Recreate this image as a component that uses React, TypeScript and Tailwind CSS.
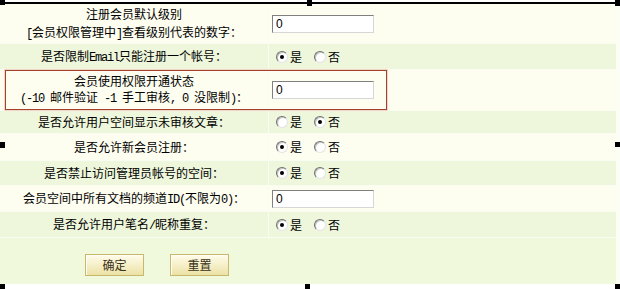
import React from "react";

const FONT = "font-['Noto_Sans_CJK_SC','Noto_Sans_CJK_SC',sans-serif]";

function M({ children }: { children: React.ReactNode }) {
  return (
    <span className="font-['Liberation_Mono',monospace] tracking-[-1.2px] whitespace-pre">
      {children}
    </span>
  );
}

function Radio({ checked }: { checked: boolean }) {
  return (
    <span className="relative inline-block w-[12px] h-[12px] rounded-full bg-white border border-t-[#6f6f6f] border-l-[#6f6f6f] border-r-[#e4e4e4] border-b-[#e4e4e4] shadow-[inset_1px_1px_0_#c4c4c4]">
      {checked && (
        <span className="absolute left-[3px] top-[3px] w-[4px] h-[4px] rounded-full bg-black" />
      )}
    </span>
  );
}

function RadioPair({ yes }: { yes: boolean }) {
  return (
    <div className="flex items-center pl-[7px] text-[12px] leading-[14px] text-black">
      <Radio checked={yes} />
      <span className="ml-[2px]">是</span>
      <span className="ml-[12px] flex items-center">
        <Radio checked={!yes} />
      </span>
      <span className="ml-[2px]">否</span>
    </div>
  );
}

function TextBox() {
  return (
    <div className="pl-[3px]">
      <input
        defaultValue="0"
        className="block w-[102px] h-[18px] bg-white border border-t-[#7f7f7f] border-l-[#7f7f7f] border-r-[#d6d6d6] border-b-[#d6d6d6] pl-[3px] text-[12px] leading-[16px] text-black font-['Liberation_Sans',sans-serif] outline-none"
      />
    </div>
  );
}

function Row({
  h,
  bg,
  label,
  right,
}: {
  h: string;
  bg: string;
  label: React.ReactNode;
  right: React.ReactNode;
}) {
  return (
    <div className={`flex gap-px ${h}`}>
      <div
        className={`w-[268px] flex flex-col items-center justify-center text-center text-[12px] text-black ${bg}`}
      >
        {label}
      </div>
      <div className={`flex-1 flex items-center ${bg}`}>{right}</div>
    </div>
  );
}

function Handle({ cls }: { cls: string }) {
  return <span className={`absolute w-[5px] h-[5px] bg-black ${cls}`} />;
}

export default function App() {
  const cream = "bg-[#fdfdf0]";
  const green = "bg-[#eef7dc]";
  return (
    <div className={`relative w-[620px] h-[289px] bg-white overflow-hidden ${FONT}`}>
      <div className="h-[2px] bg-white" />
      <div className="h-[2px] bg-black" />
      <div className="flex">
        <div className="w-[616px] flex flex-col gap-px bg-[#f9fcf1]">
          <Row
            h="h-[39px]"
            bg={cream}
            label={
              <>
                <span className="leading-[18px]">注册会员默认级别</span>
                <span className="leading-[18px]">
                  <M>[</M>会员权限管理中<M>]</M>查看级别代表的数字：
                </span>
              </>
            }
            right={<TextBox />}
          />
          <Row
            h="h-[25px]"
            bg={green}
            label={
              <span>
                是否限制<M>Email</M>只能注册一个帐号：
              </span>
            }
            right={<RadioPair yes={true} />}
          />
          <Row
            h="h-[40px]"
            bg={cream}
            label={
              <>
                <span className="leading-[16px]">会员使用权限开通状态</span>
                <span className="leading-[16px]">
                  <M>(-10 </M>邮件验证<M> -1 </M>手工审核<M>, 0 </M>没限制<M>)</M>：
                </span>
              </>
            }
            right={<TextBox />}
          />
          <Row
            h="h-[22px]"
            bg={green}
            label={<span>是否允许用户空间显示未审核文章：</span>}
            right={<RadioPair yes={false} />}
          />
          <Row
            h="h-[26px]"
            bg={cream}
            label={<span>是否允许新会员注册：</span>}
            right={<RadioPair yes={true} />}
          />
          <Row
            h="h-[24px]"
            bg={green}
            label={<span>是否禁止访问管理员帐号的空间：</span>}
            right={<RadioPair yes={true} />}
          />
          <Row
            h="h-[25px]"
            bg={cream}
            label={
              <span>
                会员空间中所有文档的频道<M>ID(</M>不限为<M>0)</M>：
              </span>
            }
            right={<TextBox />}
          />
          <Row
            h="h-[25px]"
            bg={green}
            label={
              <span>
                是否允许用户笔名<M>/</M>昵称重复：
              </span>
            }
            right={<RadioPair yes={true} />}
          />
          <div className="h-[46px] bg-[#f1f9dc] flex items-start pt-[16px] pl-[85px] gap-[26px]">
            <button className="w-[59px] h-[22px] border border-[#c9b86c] bg-gradient-to-b from-[#fffcea] to-[#ece2a6] text-[12px] leading-[20px] text-[#3a3216] shadow-[inset_1px_1px_0_#fffef6]">
              确定
            </button>
            <button className="w-[59px] h-[22px] border border-[#c9b86c] bg-gradient-to-b from-[#fffcea] to-[#ece2a6] text-[12px] leading-[20px] text-[#3a3216] shadow-[inset_1px_1px_0_#fffef6]">
              重置
            </button>
          </div>
        </div>
        <div className="flex-1 bg-[#fcfdf4]" />
      </div>

      {/* annotation box */}
      <div className="absolute left-[5px] top-[70px] w-[382px] h-[40px] border border-[#a3402e] shadow-[0_0_0_1px_#f0d6c8]" />

      {/* selection handles */}
      <Handle cls="left-0 top-0" />
      <Handle cls="left-[307px] top-0 h-[6px]" />
      <Handle cls="left-[615px] top-0 h-[6px]" />
      <Handle cls="left-0 top-[142px] w-[4px] h-[6px]" />
      <Handle cls="left-[615px] top-[142px]" />
      <Handle cls="left-0 top-[284px]" />
      <Handle cls="left-[305px] top-[284px]" />
      <Handle cls="left-[615px] top-[284px]" />
    </div>
  );
}
